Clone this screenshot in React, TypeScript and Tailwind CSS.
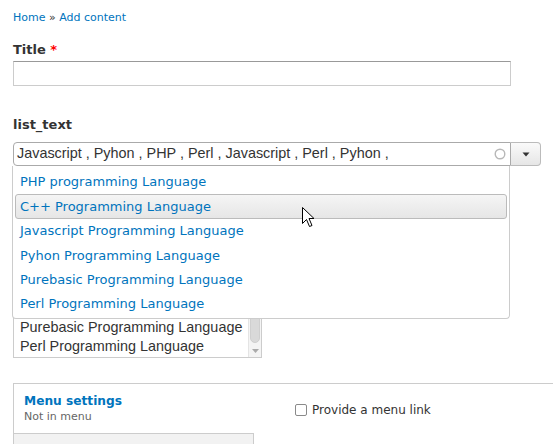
import React from "react";

const items = [
  "PHP programming Language",
  "C++ Programming Language",
  "Javascript Programming Language",
  "Pyhon Programming Language",
  "Purebasic Programming Language",
  "Perl Programming Language",
];

export default function App() {
  return (
    <div className="relative w-[553px] h-[444px] overflow-hidden bg-white font-['DejaVu_Sans',sans-serif] text-[#333]">
      <div className="pl-[13px] pt-[11px] text-[11px] leading-[13px]">
        <span className="text-[#0074bd]">Home</span>
        <span className="text-[#333]"> » </span>
        <span className="text-[#0074bd]">Add content</span>
      </div>

      <div className="ml-[13px] mt-[18px] text-[13px] leading-[16px] font-bold text-[#333]">
        Title <span className="text-[#f00]">*</span>
      </div>
      <div className="ml-[13px] mt-[3px] w-[498px] h-[25px] border border-[#ccc] border-t-[#999] bg-white" />

      <div className="ml-[13px] mt-[31px] text-[13px] leading-[16px] font-bold text-[#333]">list_text</div>

      <div className="ml-[13px] mt-[9px] flex h-[24px] w-[528px]">
        <div className="flex-1 flex items-center border border-[#aaa] rounded-l-[4px] bg-white pl-[3px] pr-[4px] font-['Liberation_Sans',Arial,sans-serif] text-[14.4px] text-[#333] whitespace-nowrap overflow-hidden">
          <span className="flex-1">Javascript , Pyhon , PHP , Perl , Javascript , Perl , Pyhon ,</span>
          <svg width="12" height="12" viewBox="0 0 12 12" className="shrink-0">
            <circle cx="6" cy="6" r="4.8" fill="none" stroke="#b8b8b8" strokeWidth="1.4" />
          </svg>
        </div>
        <div className="w-[30px] flex items-center justify-center border border-l-0 border-[#bbb] rounded-r-[4px] bg-gradient-to-b from-[#fafafa] to-[#e6e6e6]">
          <svg width="8" height="5" viewBox="0 0 8 5">
            <path d="M0.5 0.5 L7.5 0.5 L4 4.5 Z" fill="#333" />
          </svg>
        </div>
      </div>

      <div className="ml-[13px] mt-[10px] w-[249px] h-[182px] border border-[#ccc] bg-white flex">
        <div className="flex-1 flex flex-col justify-end pb-[1px] pl-[6px] font-['Liberation_Sans',Arial,sans-serif] text-[14.4px] leading-[19px] text-[#333]">
          <div className="whitespace-nowrap">Purebasic Programming Language</div>
          <div className="whitespace-nowrap">Perl Programming Language</div>
        </div>
        <div className="w-[13px] flex flex-col bg-[#f4f4f4] border-l border-[#e4e4e4]">
          <div className="flex-1 mx-[1px] mb-[2px] rounded-b-[6px] bg-[#d9d9d9] border border-[#cfcfcf]" />
          <div className="h-[12px] flex items-center justify-center">
            <svg width="7" height="4" viewBox="0 0 7 4">
              <path d="M0 0 L7 0 L3.5 4 Z" fill="#aaa" />
            </svg>
          </div>
        </div>
      </div>

      <div className="ml-[13px] mt-[25px] border-t border-l border-[#ccc] flex h-[80px]">
        <div className="w-[240px] flex flex-col">
          <div className="pl-[10px] pt-[9px] h-[49px]">
            <div className="text-[12.2px] leading-[16px] font-bold text-[#0074bd]">Menu settings</div>
            <div className="text-[11px] leading-[16px] text-[#666]">Not in menu</div>
          </div>
          <div className="flex-1 bg-[#f2f2f2] border-t border-r border-[#ccc]" />
        </div>
        <div className="pl-[41px] pt-[20px]">
          <div className="flex items-center h-[12px]">
            <div className="w-[12px] h-[12px] border border-[#8a8a8a] rounded-[2px] bg-white" />
            <span className="ml-[5px] text-[12px] leading-[14px] text-[#333]">Provide a menu link</span>
          </div>
        </div>
      </div>

      <div className="absolute left-[12px] top-[166px] w-[498px] bg-white border border-t-0 border-[#ccc] rounded-b-[4px] pt-[4px] pb-[2px]">
        {items.map((t, i) => (
          <div
            key={t}
            className={
              i === 1
                ? "h-[24.4px] mx-[2px] pl-[4px] flex items-center text-[13px] text-[#0074bd] border border-[#bbb] rounded-[3px] bg-gradient-to-b from-[#f5f5f5] to-[#e6e6e6] whitespace-nowrap"
                : "h-[24.4px] mx-[2px] pl-[4px] flex items-center text-[13px] text-[#0074bd] border border-transparent whitespace-nowrap"
            }
          >
            {t}
          </div>
        ))}
      </div>

      <svg className="absolute left-[302px] top-[207px]" width="14" height="22" viewBox="0 0 14 22">
        <path d="M0.5 0.5 L0.5 16.5 L4.5 12.5 L7.5 19.5 L10 18.5 L7 11.5 L12 11.5 Z" fill="#fff" stroke="#000" strokeWidth="1" strokeLinejoin="miter" />
      </svg>
    </div>
  );
}
